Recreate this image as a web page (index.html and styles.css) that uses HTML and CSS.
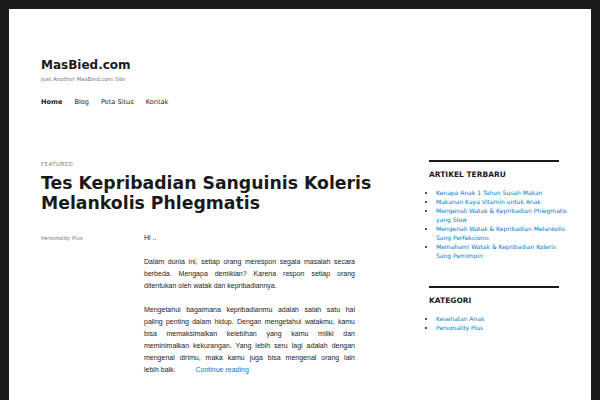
FILE: index.html
```html
<!DOCTYPE html>
<html lang="id">
<head>
<meta charset="utf-8">
<title>MasBied.com</title>
<link rel="stylesheet" href="styles.css">
</head>
<body>
<div class="site">
  <header class="site-header">
    <p class="site-title">MasBied.com</p>
    <p class="site-desc">Just Another MasBied.com Site</p>
    <nav class="main-nav">
      <a class="current" href="#">Home</a>
      <a href="#">Blog</a>
      <a href="#">Peta Situs</a>
      <a href="#">Kontak</a>
    </nav>
  </header>
  <div class="site-content">
    <main class="content-area">
      <article class="post">
        <header class="entry-header">
          <span class="sticky">Featured</span>
          <h2 class="entry-title">Tes Kepribadian Sanguinis Koleris Melankolis Phlegmatis</h2>
        </header>
        <div class="entry-body">
          <footer class="entry-footer"><a href="#">Personality Plus</a></footer>
          <div class="entry-content">
            <p>Hi ..</p>
            <p><span class="ln">Dalam dunia ini, setiap orang merespon segala masalah secara</span>
              <span class="ln">berbeda. Mengapa demikian? Karena respon setiap orang</span>
              <span class="ln end">ditentukan oleh watak dan kepribadiannya.</span></p>
            <p><span class="ln">Mengetahui bagaimana kepribadianmu adalah salah satu hal</span>
              <span class="ln">paling penting dalam hidup. Dengan mengetahui watakmu, kamu</span>
              <span class="ln">bisa memaksimalkan kelebihan yang kamu miliki dan</span>
              <span class="ln">meminimalkan kekurangan. Yang lebih seru lagi adalah dengan</span>
              <span class="ln">mengenal dirimu, maka kamu juga bisa mengenal orang lain</span>
              <span class="ln end">lebih baik. <a class="more-link" href="#">Continue reading</a></span></p>
          </div>
        </div>
      </article>
    </main>
    <aside class="sidebar">
      <section class="widget">
        <h2 class="widget-title">Artikel Terbaru</h2>
        <ul>
          <li><a href="#">Kenapa Anak 1 Tahun Susah Makan</a></li>
          <li><a href="#">Makanan Kaya Vitamin untuk Anak</a></li>
          <li><a href="#">Mengenali Watak &amp; Kepribadian Phlegmatis yang Slow</a></li>
          <li><a href="#">Mengenali Watak &amp; Kepribadian Melankolis Sang Perfeksionis</a></li>
          <li><a href="#">Memahami Watak &amp; Kepribadian Koleris Sang Pemimpin</a></li>
        </ul>
      </section>
      <section class="widget">
        <h2 class="widget-title">Kategori</h2>
        <ul>
          <li><a href="#">Kesehatan Anak</a></li>
          <li><a href="#">Personality Plus</a></li>
        </ul>
      </section>
    </aside>
  </div>
</div>
</body>
</html>
```
FILE: styles.css
```css
html, body {
  margin: 0;
  height: 100%;
}
body {
  background: #1a1a1a;
  padding: 9px 9px 0;
  box-sizing: border-box;
  font-family: "DejaVu Sans", sans-serif;
  color: #1a1a1a;
}
a {
  text-decoration: none;
  color: inherit;
}
.site {
  background: #fff;
  min-height: 391px;
  padding: 0 32px;
}
.site-header {
  padding-top: 48px;
}
.site-title {
  margin: 0;
  font-size: 12px;
  line-height: 16px;
  font-weight: bold;
}
.site-desc {
  margin: 2px 0 0;
  font-size: 5.5px;
  line-height: 8px;
  color: #777;
}
.main-nav {
  display: flex;
  gap: 12px;
  margin-top: 14px;
  font-size: 6.6px;
  line-height: 10px;
}
.main-nav .current {
  font-weight: bold;
}
.site-content {
  display: flex;
  justify-content: space-between;
  padding-top: 53px;
}
.content-area {
  width: 362px;
}
.sticky {
  display: block;
  font-size: 5.5px;
  line-height: 8px;
  letter-spacing: 0.42px;
  text-transform: uppercase;
  color: #777;
}
.entry-title {
  margin: 6px 0 0;
  font-size: 17.3px;
  line-height: 19.5px;
  font-weight: bold;
}
.entry-body {
  display: grid;
  grid-template-columns: 103px 211px;
  margin-top: 19px;
}
.entry-footer {
  font-size: 5.3px;
  line-height: 12px;
  color: #777;
}
.entry-content {
  font-family: "Liberation Sans", Arial, sans-serif;
  font-size: 7px;
  line-height: 12px;
}
.entry-content p {
  margin: 0 0 12px;
}
.ln {
  display: block;
  text-align: justify;
  text-align-last: justify;
}
.ln.end {
  text-align-last: left;
}
.more-link {
  color: #007acc;
  margin-left: 18px;
}
.sidebar {
  width: 130px;
}
.widget {
  border-top: 2px solid #1a1a1a;
  padding-top: 8px;
  margin-bottom: 26px;
}
.widget-title {
  margin: 0;
  font-size: 7.5px;
  line-height: 10px;
  font-weight: bold;
  text-transform: uppercase;
}
.widget ul {
  margin: 8px -9px 0 0;
  padding-left: 7px;
  list-style: disc;
  font-size: 6px;
  line-height: 9px;
}
.widget li a {
  color: #007acc;
}
```
